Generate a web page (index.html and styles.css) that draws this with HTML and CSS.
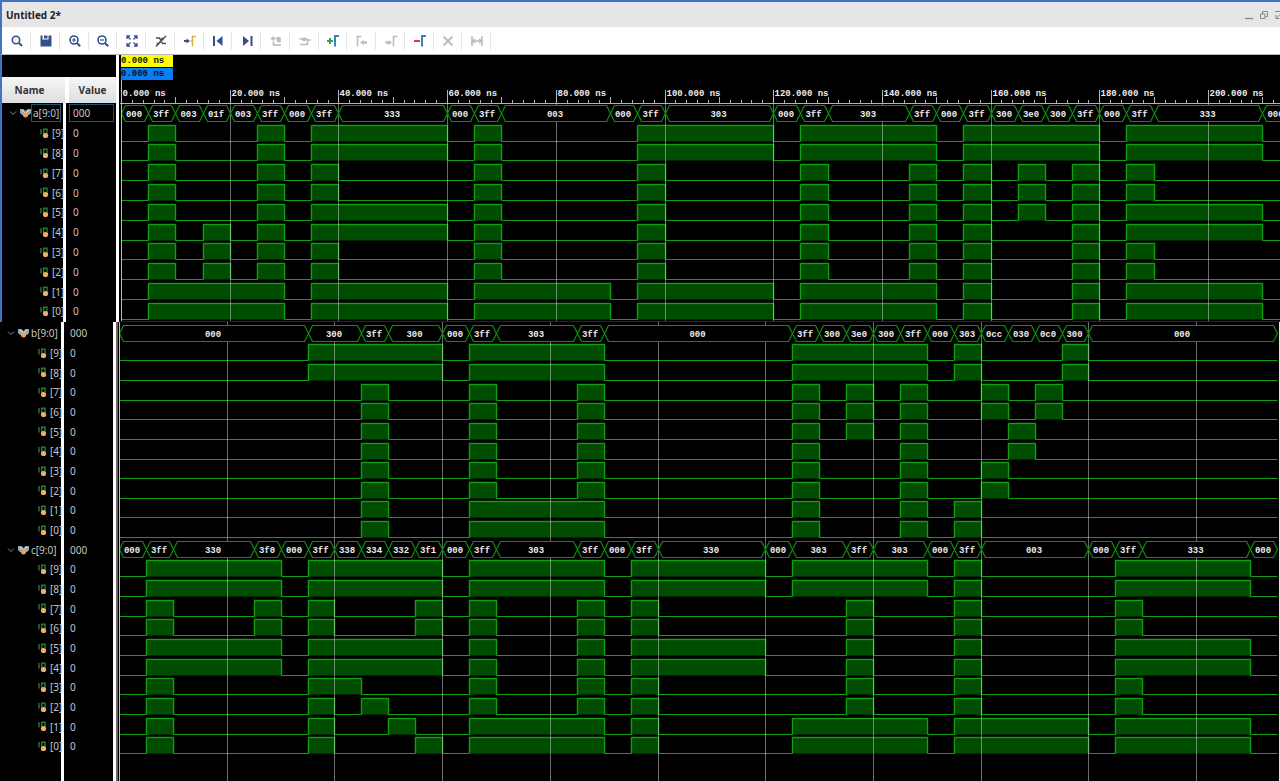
FILE: index.html
```html
<!DOCTYPE html>
<html lang="en">
<head>
<meta charset="utf-8">
<title>Untitled 2*</title>
<link rel="stylesheet" href="styles.css">
</head>
<body>
<header class="titlebar">
  <h1 class="title">Untitled 2*</h1>
  <div class="window-buttons">
    <button class="win" aria-label="Minimize"><svg viewBox="0 0 10 10"><path d="M1 8.500h8" stroke-width="1.400"/></svg></button>
    <button class="win" aria-label="Restore"><svg viewBox="0 0 10 10"><path d="M1.500 4h4.500v4.500h-4.500zM3.500 4v-2.500h5v5h-2.500"/></svg></button>
    <button class="win" aria-label="Float"><svg viewBox="0 0 10 10"><path d="M1 1.500h8M2 8.500l5-5M2 5v3.500h3.500"/></svg></button>
  </div>
</header>
<div class="toolbar" role="toolbar" aria-label="Waveform tools">
  <button class="tool" aria-label="Find"><svg viewBox="0 0 16 16"><circle cx="7" cy="7" r="3.700"/><path d="M10 10l3 3" stroke-width="2"/></svg></button>
  <button class="tool" aria-label="Save"><svg viewBox="0 0 16 16"><path class="solid" d="M2.500 2.500h2v4h6v-4h3v11h-11zM6 2.500h3.500v3h-3.500z"/></svg></button>
  <button class="tool" aria-label="Zoom in"><svg viewBox="0 0 16 16"><circle cx="7" cy="7" r="4"/><path d="M10.200 10.200l3 3" stroke-width="2"/><path d="M5 7h4M7 5v4" stroke-width="1.200"/></svg></button>
  <button class="tool" aria-label="Zoom out"><svg viewBox="0 0 16 16"><circle cx="7" cy="7" r="4"/><path d="M10.200 10.200l3 3" stroke-width="2"/><path d="M5 7h4" stroke-width="1.200"/></svg></button>
  <button class="tool" aria-label="Zoom fit"><svg viewBox="0 0 16 16"><path d="M3 6v-3h3M10 3h3v3M13 10v3h-3M6 13h-3v-3M3.500 3.500l3 3M12.500 3.500l-3 3M12.500 12.500l-3-3M3.500 12.500l3-3" stroke-width="1.300"/></svg></button>
  <button class="tool dark" aria-label="Zoom to cursor"><svg viewBox="0 0 16 16"><path d="M3 13.500l10-10.500M3 5h3.500l3 5.500h3.500M3.500 10.500h2.500l3-5h2" stroke-width="1.500"/></svg></button>
  <button class="tool" aria-label="Go to cursor"><svg viewBox="0 0 16 16"><path class="solid" d="M2 7h2.500v-1.500l3.500 2.500-3.500 2.500v-1.500h-2.500z"/><path class="gold" d="M10.500 13.500v-10h3.500M8.500 8h2"/></svg></button>
  <button class="tool" aria-label="Go to start"><svg viewBox="0 0 16 16"><path d="M4 3v10" stroke-width="2"/><path class="solid" d="M12.500 3v10l-6-5z"/></svg></button>
  <button class="tool" aria-label="Go to end"><svg viewBox="0 0 16 16"><path d="M12.500 3v10" stroke-width="2"/><path class="solid" d="M4 3v10l6-5z"/></svg></button>
  <button class="tool off" aria-label="Previous transition"><svg viewBox="0 0 16 16"><path d="M13 5.500h-9M6 3.500l-2.500 2 2.500 2M5.500 8.500v3.500h7.500M9 8.500h4"/><path class="solid" d="M9 4h3.500v4h-3.500z"/></svg></button>
  <button class="tool off" aria-label="Next transition"><svg viewBox="0 0 16 16"><path d="M2.500 6h8M3 11.500h7.500v-4.500h3.500"/><path class="solid" d="M5.500 4.500h3.500v3.500h-3.500z"/></svg></button>
  <button class="tool" aria-label="Add marker"><svg viewBox="0 0 16 16"><path class="green" d="M2 8h6M5 5v6"/><path class="blue" d="M10 13.500v-10.500h4"/></svg></button>
  <button class="tool off" aria-label="Previous marker"><svg viewBox="0 0 16 16"><path d="M3.500 13.500v-10h4"/><path class="solid" d="M6 9.500l3.500-2.500v1.200h3.500v2.600h-3.500v1.200z"/></svg></button>
  <button class="tool off" aria-label="Next marker"><svg viewBox="0 0 16 16"><path d="M10.500 13.500v-10h4"/><path class="solid" d="M9 9.500l-3.500-2.500v1.200h-3v2.600h3v1.200z"/></svg></button>
  <button class="tool" aria-label="Remove marker"><svg viewBox="0 0 16 16"><path class="red" d="M2 8h6"/><path class="blue" d="M10 13.500v-10.500h4"/></svg></button>
  <button class="tool off" aria-label="Delete"><svg viewBox="0 0 16 16"><path d="M3.500 3.500l9 9M12.500 3.500l-9 9" stroke-width="1.900"/></svg></button>
  <button class="tool off" aria-label="Swap cursors"><svg viewBox="0 0 16 16"><path d="M3 3v10M13 3v10M3 8h10M6 6l-2.500 2 2.500 2M10 6l2.500 2-2.500 2"/></svg></button>
</div>
<main class="viewer">
  <section class="panel panel-top">
    <div class="side">
      <div class="side-blank"></div>
      <table class="signals" data-groups="a">
        <thead><tr><th class="name-col">Name</th><th class="value-col">Value</th></tr></thead>
        <tbody></tbody>
      </table>
    </div>
    <div class="wave">
      <div class="times">
        <div class="stamp stamp-cursor">0.000 ns</div>
        <div class="stamp stamp-marker">0.000 ns</div>
      </div>
      <svg class="plot" data-groups="a" data-top="23" data-step="27.175" data-origin="2" data-pitch="19.8"></svg>
    </div>
  </section>
  <section class="panel panel-bottom">
    <div class="side">
      <table class="signals" data-groups="b c"><tbody></tbody></table>
    </div>
    <div class="wave">
      <svg class="plot" data-groups="b c" data-top="1" data-step="26.93" data-origin="1" data-pitch="19.64"></svg>
    </div>
  </section>
</main>
<script src="waves.js"></script>
</body>
</html>
```

FILE: styles.css
```css
* { box-sizing: border-box; }

body {
  margin: 0;
  min-height: 100vh;
  display: flex;
  flex-direction: column;
  overflow: hidden;
  background: #000;
  border-top: 2px solid #4472c4;
  font-family: "Noto Sans", "Open Sans", sans-serif;
  font-size: 10px;
}

button { padding: 0; border: 0; background: none; }

.titlebar {
  display: flex;
  align-items: center;
  justify-content: space-between;
  height: 25px;
  padding-left: 4px;
  border-left: 2px solid #4472c4;
  background: #e6e6e6;
}

.title { margin: 0; font-family: "Open Sans", sans-serif; font-size: 10px; font-weight: 700; color: #222; }

.window-buttons { display: flex; gap: 5px; width: 36px; overflow: hidden; }
.win { flex: none; width: 10px; height: 10px; }
.win svg { display: block; width: 10px; height: 10px; fill: none; stroke: #8a8a8a; }

.toolbar {
  display: flex;
  height: 28px;
  background: #fff;
  border-left: 2px solid #4472c4;
  border-bottom: 1px solid #b8b8b8;
}

.tool {
  flex: none;
  width: 29px;
  display: grid;
  place-items: center;
  color: #34508c;
  background: linear-gradient(#e6e6e6, #e6e6e6) right center / 1px 18px no-repeat;
}
.tool:nth-child(4n) { width: 28px; }
.tool svg { width: 16px; height: 16px; fill: none; stroke: currentColor; stroke-width: 1.6; }
.tool .solid { fill: currentColor; stroke: none; fill-rule: evenodd; }
.tool .gold { stroke: #e0b13a; }
.tool .green { stroke: #2fa84a; stroke-width: 2; }
.tool .red { stroke: #e03a3a; stroke-width: 2; }
.tool .blue { stroke: #3f7fc0; stroke-width: 2; }
.dark { color: #4a5260; }
.off { color: #bcbcbc; }

.viewer { flex: 1; display: flex; flex-direction: column; }
.panel { display: flex; }
.panel-bottom { flex: 1; padding-right: 1px; background: #e8e0e4; }

.side { flex: none; color: #c4c4c4; }
.panel-top .side {
  width: 119px;
  border-left: 2px solid #4472c4;
  border-right: 3px solid #fff;
  background: linear-gradient(90deg, transparent 61px, #fff 61px, #fff 64px, transparent 64px);
}
.panel-bottom .side {
  width: 116px;
  padding-top: 1px;
  border-right: 3px solid #fff;
  background: linear-gradient(90deg, #000 61px, #fff 61px, #fff 64px, #000 64px);
}
.side-blank { height: 22px; background: #000; }

.signals { width: 100%; table-layout: fixed; border-collapse: collapse; }
.signals th {
  height: 26px;
  padding: 0;
  background: linear-gradient(#f6f6f6, #dedede);
  color: #333;
  font-family: "Open Sans", sans-serif;
  font-weight: 700;
}
.signals .name-col { width: 65px; border-right: 4px solid #fff; padding-right: 8px; }
.signals td { height: 20px; padding: 0; line-height: 18px; white-space: nowrap; }
.panel-top tbody tr:nth-child(5n) td { height: 19px; }
.panel-bottom tbody tr:nth-child(3n) td { height: 19px; }
.signals .name { width: 65px; }
.panel-bottom .name { width: 64px; }

.name-box {
  display: flex;
  align-items: center;
  height: 18px;
  padding-left: 6px;
}
.bit .name-box { padding-left: 37px; gap: 2px; }
.name-box svg { flex: none; display: block; }
.chevron { width: 10px; height: 10px; fill: none; stroke: #8c8c8c; }
.bus-icon { width: 11px; height: 10px; margin-left: 2px; margin-right: 1px; }
.bit-icon { width: 11px; height: 11px; }
.label { padding: 0 1px; border: 1px solid transparent; line-height: 16px; }
.bus .label { margin-left: -1px; }
.bit .label { padding: 0; border: 0; }
.value-box { margin: 0 2px; padding: 0 3px; border: 1px solid transparent; line-height: 16px; }
.selected .label, .selected .value-box { border-color: #1d5276; }

.wave { flex: 1; min-width: 0; display: flex; flex-direction: column; background: #000; overflow: hidden; }
.panel-top .wave { height: 267px; border-bottom: 1px solid #003c00; }
.panel-bottom .wave { border-left: 2px solid #6e6468; }
.times { height: 25px; padding-left: 2px; }
.stamp {
  width: 52px;
  height: 12px;
  margin-bottom: 1px;
  font: bold 9px/12px "Liberation Mono", monospace;
  color: #111;
}
.stamp-cursor { background: #ff0; }
.stamp-marker { background: #0a7cf5; }

.plot { flex: 1; display: block; width: 100%; min-height: 0; }
.panel-bottom .plot { min-height: 459px; }
.plot text { font: bold 9px "Liberation Mono", monospace; fill: #ececec; }
.high { fill: #004c00; }
.trace { fill: none; stroke: #10a010; }
.glow { fill: none; stroke: #0a8a0a; stroke-width: 2; stroke-opacity: 0.5; }
.cell { fill: #000; stroke: #0d8f0d; stroke-width: 1.2; }
.gridline { stroke: #d8d8d8; stroke-opacity: 0.5; }
.tick { stroke: #b4b4b4; }
.cursor { stroke: #d8d800; }
```

FILE: waves.js
```js
// Bus values as "hex" or "hex*count"; each unit lasts 5 ns.
const buses = {
  a: '000 3ff 003 01f 003 3ff 000 3ff 333*4 000 3ff 003*4 000 3ff 303*4 000 3ff 303*3 3ff 000 3ff 300 3e0 300 3ff 000 3ff 333*4 000',
  b: '000*7 300*2 3ff 300*2 000 3ff 303*3 3ff 000*7 3ff 300 3e0 300 3ff 000 303 0cc 030 0c0 300 000*7',
  c: '000 3ff 330*3 3f0 000 3ff 338 334 332 3f1 000 3ff 303*3 3ff 000 3ff 330*4 000 303*2 3ff 303*2 000 3ff 003*4 000 3ff 333*4 000'
};

const busIcon = '<svg class="bus-icon" viewBox="0 0 11 10"><path d="M0 1h3.500l2 2 2-2h3.500v4l-2 2h-7l-2-2z" fill="#8fa9b8"/><path d="M2 2l3 3M9 2l-3 3" stroke="#dce6ea"/><circle cx="5.500" cy="6.800" r="2.600" fill="#f0a050"/></svg>';
const bitIcon = '<svg class="bit-icon" viewBox="0 0 11 11"><path d="M2 1v5.500M4.700 1.200h3.300v4.500h-3.300z" fill="none" stroke="#2c7a38" stroke-width="1.400"/><circle cx="6.500" cy="7.500" r="2.600" fill="#f0b060"/></svg>';
const chevron = '<svg class="chevron" viewBox="0 0 10 10"><path d="M2 3.500l3 3 3-3"/></svg>';

const segments = name => {
  let t = 0;
  return buses[name].split(' ').map(item => {
    const [hex, n] = item.split('*');
    const s = { hex, from: t, to: t + Number(n || 1) };
    t = s.to;
    return s;
  });
};

const row = (cls, icon, label, value) =>
  `<tr class="${cls}"><td class="name"><div class="name-box">${icon}<span class="label">${label}</span></div></td>` +
  `<td><div class="value-box">${value}</div></td></tr>`;

document.querySelectorAll('.signals').forEach(table => {
  let html = '';
  table.dataset.groups.split(' ').forEach(g => {
    html += row(g === 'a' ? 'bus selected' : 'bus', chevron + busIcon, g + '[9:0]', '000');
    for (let b = 9; b >= 0; b--) html += row('bit', bitIcon, `[${b}]`, '0');
  });
  table.tBodies[0].innerHTML = html;
});

document.querySelectorAll('.plot').forEach(svg => {
  const d = svg.dataset;
  const step = Number(d.step), origin = Number(d.origin), pitch = Number(d.pitch);
  const isTop = d.groups === 'a';
  const top = Number(d.top);
  const snap = v => Math.round(v) + 0.5;
  const x = t => snap(origin + t * step);
  let bars = '', grid = '', cells = '', r = 0;

  d.groups.split(' ').forEach(g => {
    const segs = segments(g);
    const end = x(segs[segs.length - 1].to);
    const y0 = snap(top + r * pitch + 1.5), y1 = y0 + 16, ym = y0 + 8;
    segs.forEach(s => {
      const a = x(s.from), b = x(s.to);
      cells += `<path class="cell" d="M${a} ${ym}L${a + 4} ${y0}H${b - 4}L${b} ${ym}L${b - 4} ${y1}H${a + 4}Z"/>`;
      cells += `<text x="${(a + b) / 2 - 1}" y="${ym + 3}" text-anchor="middle">${s.hex}</text>`;
    });
    r++;
    for (let bit = 9; bit >= 0; bit--, r++) {
      const hi = snap(top + r * pitch + 1.7), lo = hi + 16;
      let path = `M${x(0)} ${lo}`, fill = '', tops = '', prev = 0, start = 0;
      segs.forEach(s => {
        const on = (parseInt(s.hex, 16) >> bit) & 1;
        if (on !== prev) {
          const edge = x(s.from);
          if (on) {
            start = edge;
            path += `H${edge}V${hi}`;
          } else {
            fill += `M${start} ${hi}H${edge}V${lo}H${start}Z`;
            tops += `M${start} ${lo}V${hi}H${edge}V${lo}`;
            path += `H${edge}V${lo}`;
          }
        }
        prev = on;
      });
      bars += `<path class="high" d="${fill}"/><path class="glow" d="${tops}"/><path class="trace" d="${path}H${end}"/>`;
    }
  });

  for (let ns = 20; ns <= 200; ns += 20) {
    grid += `<path class="gridline" d="M${x(ns / 5)} ${isTop ? 10 : 0}V2000"/>`;
  }
  if (isTop) {
    grid += '<path class="tick" d="M1 23.500H4000"/>';
    for (let ns = 2; ns <= 214; ns += 2) {
      const h = ns % 20 === 0 ? 13 : ns % 10 === 0 ? 6 : 3;
      grid += `<path class="tick" d="M${x(ns / 5)} 23V${23 - h}"/>`;
    }
    for (let ns = 0; ns <= 200; ns += 20) {
      grid += `<text x="${x(ns / 5) + 1}" y="16">${ns}.000 ns</text>`;
    }
  }
  const cursor = `<path class="cursor" d="M${x(0)} 0V2000"/>`;
  svg.innerHTML = bars + grid + cells + cursor;
});
```
